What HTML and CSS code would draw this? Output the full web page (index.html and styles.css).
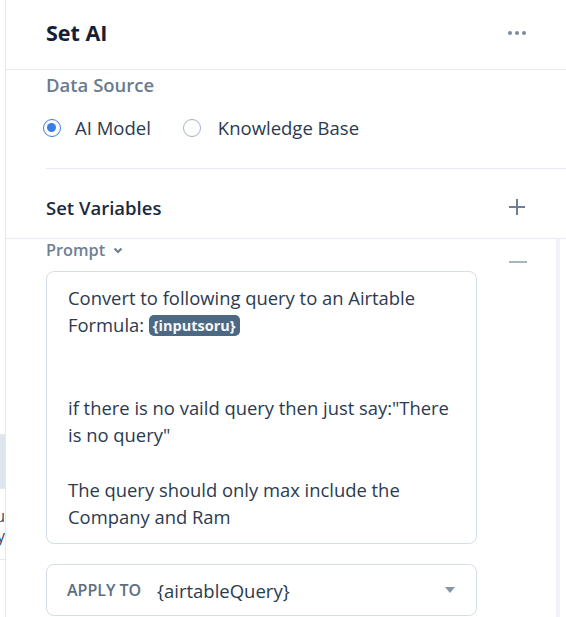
FILE: index.html
```html
<!DOCTYPE html>
<html>
<head>
<meta charset="utf-8">
<link rel="stylesheet" href="styles.css">
</head>
<body>
<div class="side">
  <div class="side-box"></div>
  <div class="side-text">
    <div>ou</div>
    <div>ry</div>
  </div>
  <div class="side-line"></div>
</div>
<main class="panel">
  <header class="head">
    <h1 class="title">Set AI</h1>
    <svg class="dots" width="18" height="4" viewBox="0 0 18 4"><circle cx="2" cy="2" r="2"/><circle cx="9" cy="2" r="2"/><circle cx="16" cy="2" r="2"/></svg>
  </header>
  <section class="source">
    <div class="label">Data Source</div>
    <div class="radios">
      <label class="radio"><span class="dot on"></span>AI Model</label>
      <label class="radio"><span class="dot"></span>Knowledge Base</label>
    </div>
  </section>
  <section class="vars">
    <div class="vars-title">Set Variables</div>
    <svg class="plus" width="18" height="18" viewBox="0 0 18 18"><path d="M9 1v16M1 9h16" stroke-width="2"/></svg>
  </section>
  <div class="scroll">
    <div class="scroll-body">
      <div class="row">
        <div class="col">
          <div class="prompt-label">Prompt <svg class="chev" width="10" height="7" viewBox="0 0 10 7"><path d="M1.5 1.5L5 5l3.5-3.5" stroke-width="2.2" fill="none"/></svg></div>
          <div class="box">
            <p>Convert to following query to an Airtable Formula: <span class="chip">{inputsoru}</span></p>
            <p class="blank"></p>
            <p class="blank"></p>
            <p>if there is no vaild query then just say:"There is no query"</p>
            <p class="blank"></p>
            <p>The query should only max include the Company and Ram</p>
          </div>
          <div class="apply">
            <span class="apply-label">APPLY TO</span>
            <span class="apply-value">{airtableQuery}</span>
            <svg class="caret" width="10" height="6" viewBox="0 0 10 6"><path d="M0 0h10L5 6z"/></svg>
          </div>
        </div>
        <svg class="minus" width="18" height="2" viewBox="0 0 18 2"><rect width="18" height="2"/></svg>
      </div>
    </div>
    <div class="track"></div>
  </div>
</main>
</body>
</html>
```
FILE: styles.css
```css
html, body {
  margin: 0;
  padding: 0;
}
body {
  width: 566px;
  height: 617px;
  overflow: hidden;
  display: flex;
  background: #fff;
  font-family: "Open Sans", "Noto Sans", sans-serif;
  color: #2b3a4f;
}
.side {
  width: 5px;
  flex: none;
  border-right: 1px solid #e4e9ef;
  overflow: hidden;
}
.side-box {
  margin-top: 434px;
  height: 53px;
  background: #dfe5ec;
  border-top: 1px solid #e4e9ef;
  border-bottom: 1px solid #e4e9ef;
}
.side-text {
  margin-top: 17px;
  font-size: 16px;
  line-height: 20px;
  color: #3a4a5e;
  white-space: nowrap;
}
.side-text div {
  width: 5px;
  display: flex;
  justify-content: flex-end;
}
.side-line {
  margin-top: 13px;
  border-top: 1px solid #e4e9ef;
}
.panel {
  flex: 1;
  display: flex;
  flex-direction: column;
  min-width: 0;
}
.head {
  height: 70px;
  box-sizing: border-box;
  border-bottom: 1px solid #e6ebf1;
  display: flex;
  align-items: center;
  justify-content: space-between;
  padding: 0 40px 4px 40px;
}
.title {
  margin: 0;
  font-size: 21.5px;
  font-weight: 700;
  color: #132036;
}
.dots {
  fill: #7b8a9c;
}
.source {
  margin-left: 40px;
  height: 99px;
  box-sizing: border-box;
  border-bottom: 1px solid #e6ebf1;
  padding-top: 3px;
}
.label {
  font-size: 18.5px;
  font-weight: 600;
  color: #6a7b8e;
  line-height: 24px;
}
.radios {
  display: flex;
  gap: 32px;
  margin-top: 18px;
}
.radio {
  display: flex;
  align-items: center;
  gap: 14px;
  font-size: 18.5px;
  color: #2b3a4f;
  line-height: 26px;
}
.radio + .radio {
  gap: 17px;
}
.dot {
  width: 18px;
  height: 18px;
  box-sizing: border-box;
  border-radius: 50%;
  border: 1.5px solid #a3b0bf;
  display: inline-block;
  margin-left: -3px;
  position: relative;
}
.radio + .radio .dot {
  margin-left: 0;
}
.dot.on {
  border-color: #3b7de2;
}
.dot.on::after {
  content: "";
  position: absolute;
  left: 3px;
  top: 3px;
  width: 9px;
  height: 9px;
  border-radius: 50%;
  background: #3b7de2;
}
.vars {
  height: 70px;
  box-sizing: border-box;
  border-bottom: 1px solid #e6ebf1;
  display: flex;
  align-items: center;
  justify-content: space-between;
  padding: 7px 40px 0 40px;
}
.vars-title {
  font-size: 18.5px;
  font-weight: 600;
  color: #1b2a40;
}
.plus {
  stroke: #6f7f92;
}
.scroll {
  flex: 1;
  display: flex;
  min-height: 0;
}
.scroll-body {
  flex: 1;
  padding-left: 40px;
}
.track {
  width: 4px;
  margin-right: 6px;
  background: #f1f3f8;
}
.row {
  display: flex;
  align-items: flex-start;
}
.col {
  width: 431px;
  flex: none;
}
.minus {
  margin-left: 32px;
  margin-top: 22px;
  fill: #aab5c3;
}
.prompt-label {
  font-size: 16.3px;
  font-weight: 600;
  color: #6f8093;
  line-height: 20px;
  margin-top: 1px;
  display: flex;
  align-items: center;
  gap: 8px;
}
.chev {
  stroke: #6f8093;
}
.box {
  margin-top: 11px;
  border: 1px solid #d6dde6;
  border-radius: 8px;
  padding: 12px 14px 12px 21px;
  height: 273px;
  box-sizing: border-box;
}
.box p {
  margin: 0;
  font-size: 18.4px;
  line-height: 27.4px;
  color: #2b3a4f;
}
.box p.blank {
  height: 27.4px;
}
.chip {
  display: inline-block;
  background: #4d6883;
  color: #f4f7fa;
  font-size: 14.5px;
  font-weight: 700;
  line-height: 21px;
  padding: 0 4px;
  border-radius: 5px;
  vertical-align: 1px;
}
.apply {
  margin-top: 20px;
  border: 1px solid #d6dde6;
  border-radius: 8px;
  height: 52px;
  box-sizing: border-box;
  display: flex;
  align-items: center;
  padding: 0 21px 0 20px;
}
.apply-label {
  font-size: 16px;
  font-weight: 600;
  color: #5d6e82;
  width: 90px;
  flex: none;
}
.apply-value {
  flex: 1;
  font-size: 18.5px;
  color: #2b3a4f;
}
.caret {
  fill: #8795a6;
}
```
